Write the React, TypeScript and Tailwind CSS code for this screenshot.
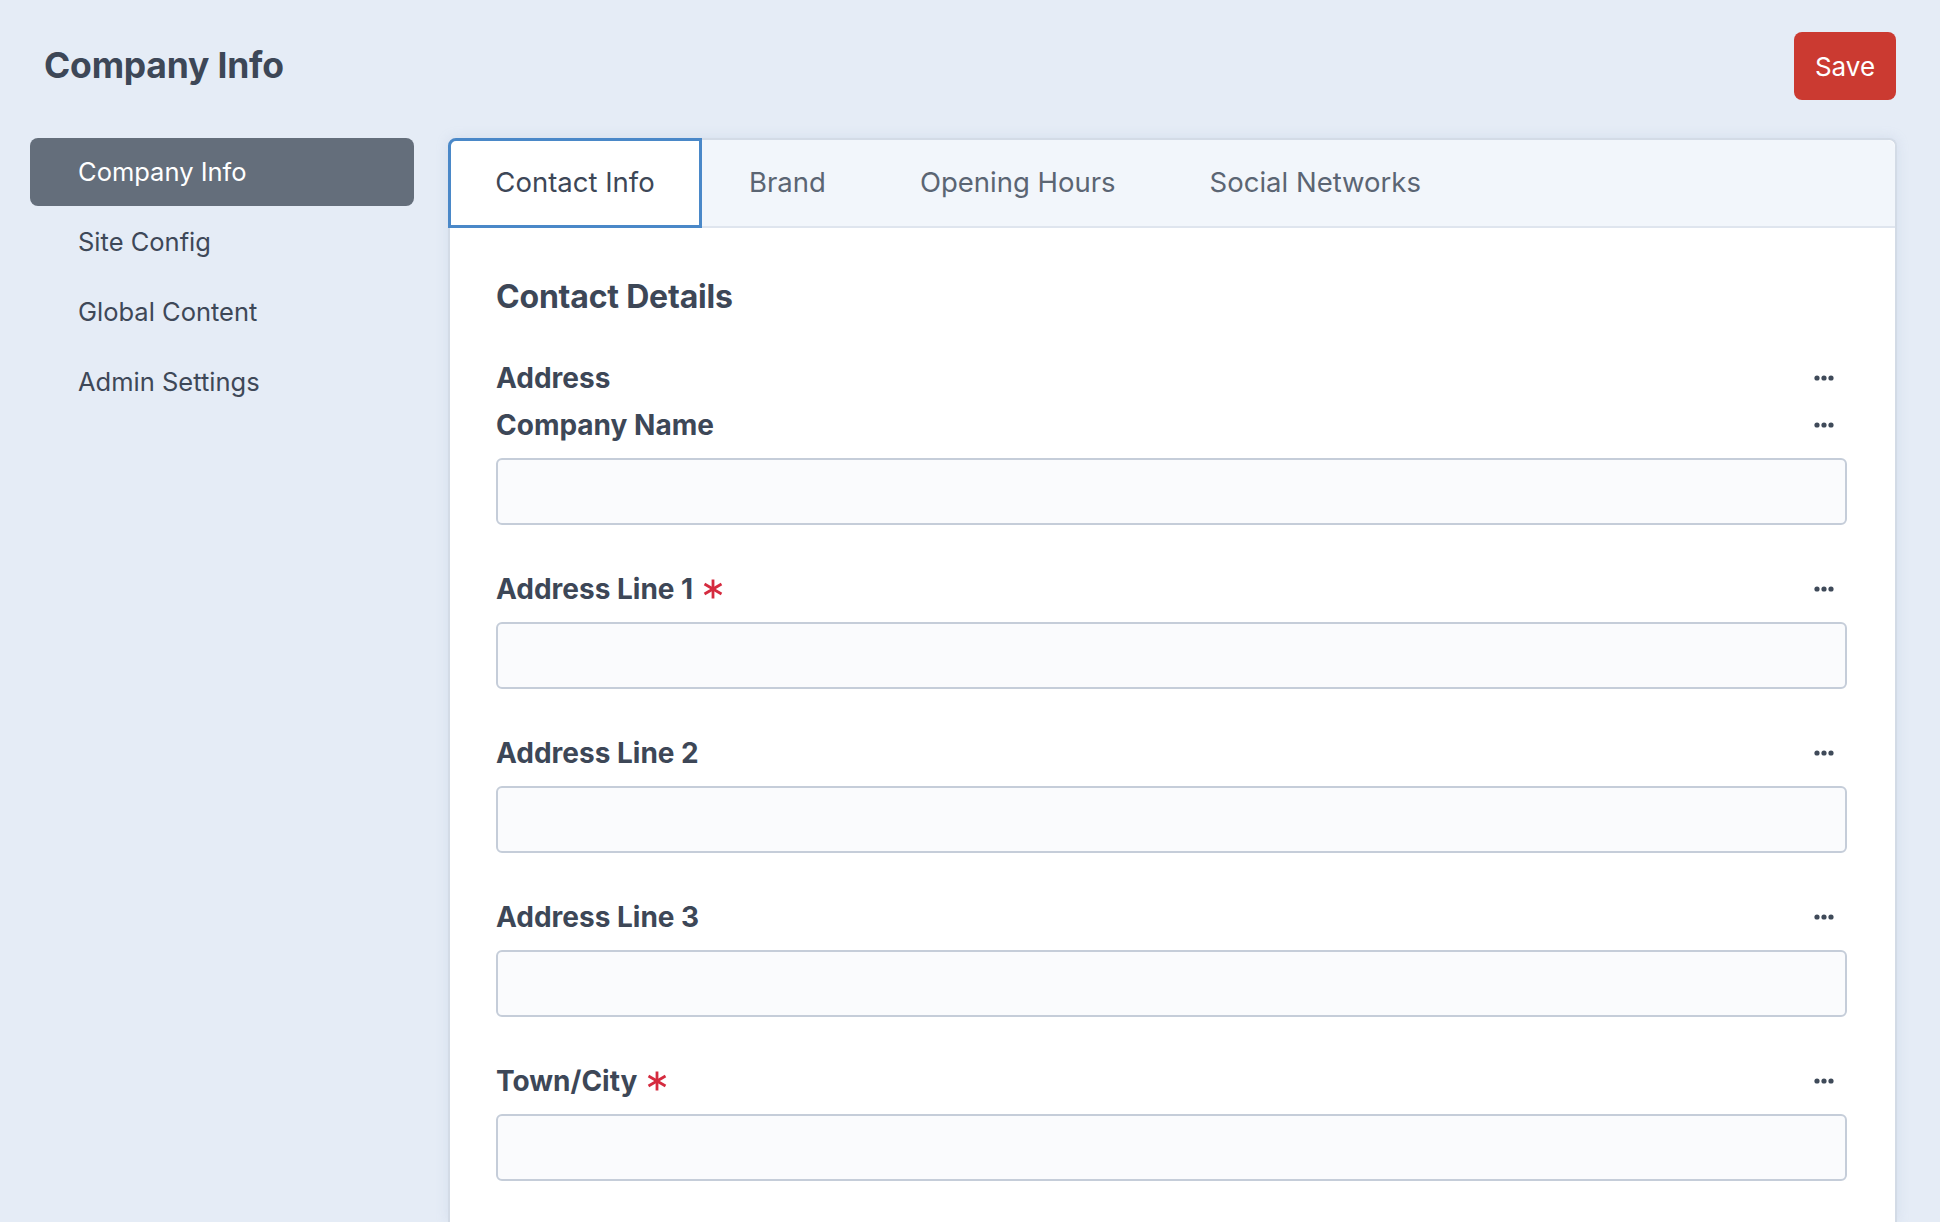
import React from "react";

const tabs = ["Contact Info", "Brand", "Opening Hours", "Social Networks"];
const menu = ["Company Info", "Site Config", "Global Content", "Admin Settings"];

const fields = [
  { label: "Company Name", required: false },
  { label: "Address Line 1", required: true },
  { label: "Address Line 2", required: false },
  { label: "Address Line 3", required: false },
  { label: "Town/City", required: true },
];

function Dots() {
  return (
    <svg width="20" height="6" viewBox="0 0 20 6" className="text-[#3f4a59]">
      <circle cx="3" cy="3" r="2.6" fill="currentColor" />
      <circle cx="10" cy="3" r="2.6" fill="currentColor" />
      <circle cx="17" cy="3" r="2.6" fill="currentColor" />
    </svg>
  );
}

function Asterisk() {
  return (
    <svg width="20" height="20" viewBox="0 0 20 20" className="text-[#d52b3f]">
      <g stroke="currentColor" strokeWidth="2.8" strokeLinecap="butt">
        <line x1="10" y1="0.5" x2="10" y2="19.5" />
        <line x1="1.5" y1="5" x2="18.5" y2="15" />
        <line x1="1.5" y1="15" x2="18.5" y2="5" />
      </g>
    </svg>
  );
}

function LabelRow({ label, required }: { label: string; required?: boolean }) {
  return (
    <div className="h-10 flex items-center justify-between">
      <div className="flex items-center gap-[10px]">
        <span className="text-[28px] font-bold text-[#3d4757]">{label}</span>
        {required && <Asterisk />}
      </div>
      <div className="pr-[13px]">
        <Dots />
      </div>
    </div>
  );
}

export default function App() {
  return (
    <main className="w-full h-[1222px] overflow-hidden bg-[#e5ecf6] font-['Inter',sans-serif] flex flex-col">
      <div className="h-[68px] mt-[32px] flex items-center justify-between pl-[44px] pr-[44px]">
        <h1 className="text-[35.5px] font-bold text-[#3d4757] tracking-[-0.2px]">Company Info</h1>
        <button className="w-[102px] h-[68px] rounded-lg bg-[#cb3a31] text-white text-[26px]">Save</button>
      </div>

      <div className="flex-1 flex gap-[34px] pl-[30px] pr-[43px] mt-[38px] min-h-0">
        <nav className="w-[384px] flex flex-col gap-[2px]">
          {menu.map((m, i) => (
            <div
              key={m}
              className={
                i === 0
                  ? "h-[68px] flex items-center px-[48px] rounded-lg bg-[#646e7b] text-white text-[25.5px]"
                  : "h-[68px] flex items-center px-[48px] text-[#3e4858] text-[25.5px]"
              }
            >
              {m}
            </div>
          ))}
        </nav>

        <section className="flex-1 flex flex-col bg-white border-2 border-b-0 border-[#d3dbe6] rounded-t-lg shadow-[0_0_12px_rgba(160,180,210,0.25)]">
          <div className="h-[88px] flex bg-[#f2f6fb] border-b-2 border-[#dfe5ee] rounded-t-lg">
            {tabs.map((t, i) => (
              <div
                key={t}
                className={
                  i === 0
                    ? "-ml-[2px] -mt-[2px] -mb-[2px] w-[254px] flex items-center justify-center bg-white border-[3px] border-[#4a88c8] rounded-tl-lg text-[27.5px] text-[#3d4757]"
                    : "flex items-center px-[47px] text-[27.5px] text-[#5b6573]"
                }
              >
                {t}
              </div>
            ))}
          </div>

          <div className="pl-[46px] pr-[48px] pt-[51px] flex flex-col">
            <h2 className="h-9 flex items-center text-[32px] font-bold text-[#3d4757] tracking-[-0.2px]">Contact Details</h2>
            <div className="mt-[43px]">
              <LabelRow label="Address" />
            </div>
            <div className="mt-[7px] flex flex-col gap-[44px]">
              {fields.map((f) => (
                <div key={f.label} className="flex flex-col">
                  <LabelRow label={f.label} required={f.required} />
                  <input
                    type="text"
                    className="mt-[13px] h-[67px] w-full rounded-md border-2 border-[#c5cdd9] bg-[#fafbfd] px-4 text-[24px] outline-none"
                  />
                </div>
              ))}
            </div>
          </div>
        </section>
      </div>
    </main>
  );
}
